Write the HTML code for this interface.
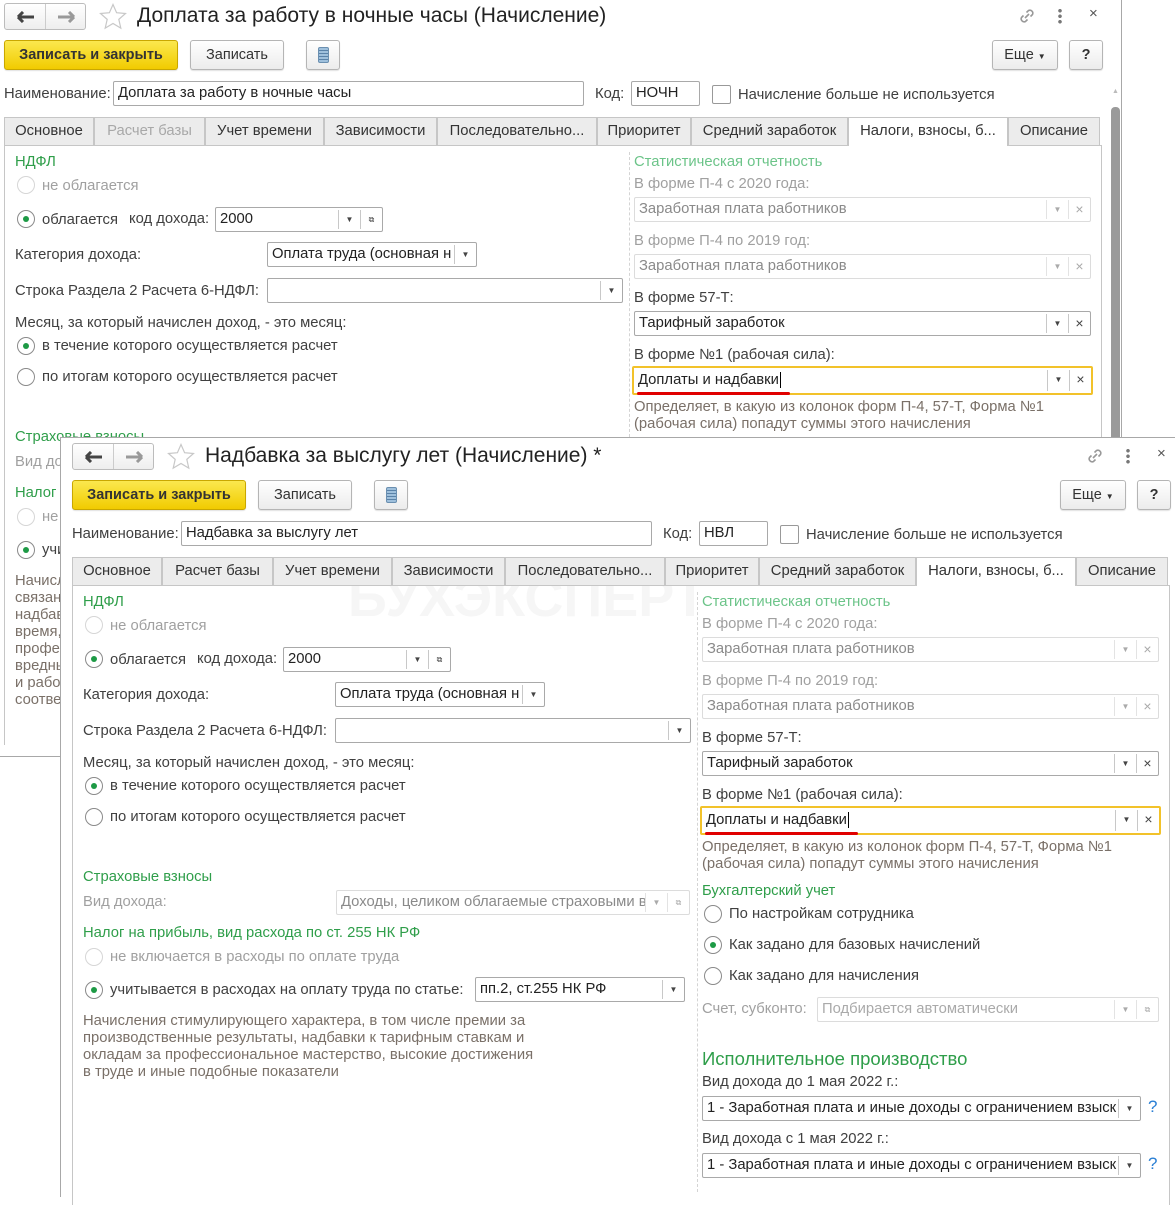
<!DOCTYPE html>
<html><head><meta charset="utf-8">
<style>
*{box-sizing:border-box;margin:0;padding:0}
body{width:1175px;height:1184px;overflow:hidden;background:#fff;position:relative;font-family:"Liberation Sans",Arial,sans-serif;font-size:14.8px;color:#333}
.w{position:absolute;width:1122px;height:760px}
.bg{position:absolute;background:#fff}
.t{position:absolute;white-space:nowrap;line-height:18px;font-size:14.8px;color:#404040}
.g{color:#2f9e4a}
.lg{color:#6cc489}
.gr{color:#a0a0a0}
.in{position:absolute;height:25px;border:1px solid #a9a9a9;border-radius:2px;background:#fff;line-height:23px;padding-left:4px;color:#222;overflow:hidden;white-space:nowrap;font-size:14.8px}
.in.d{border-color:#dcdcdc;color:#8a8a8a}
.b{position:absolute;top:2px;bottom:2px;width:22px;border-left:1px solid #c8c8c8;text-align:center;font-size:8px;color:#444;line-height:19px;background:#fff}
.d .b{border-left-color:#e3e3e3;color:#aaa}
.x{font-size:14px;line-height:19px}
.r{position:absolute;width:18px;height:18px;border:1px solid #8a8a8a;border-radius:50%;background:#fff}
.r.dis{border-color:#d6d6d6}
.r.on::after{content:"";position:absolute;left:5px;top:5px;width:6px;height:6px;border-radius:50%;background:#1d9a45}
.btn{position:absolute;top:40px;height:30px;border:1px solid #b5b5b5;border-radius:3px;background:linear-gradient(#fff,#ececec);text-align:center;line-height:28px;font-size:14.5px;color:#333;box-shadow:0 1px 1px rgba(0,0,0,.12)}
.y{background:linear-gradient(#fbe84e,#f1cb00);border-color:#c9a700;font-weight:bold;color:#333}
.tab{position:absolute;top:117px;height:28px;border:1px solid #c6c6c6;border-bottom:none;background:#ececec;text-align:center;line-height:27px;font-size:14.8px;color:#333;white-space:nowrap}
.tab.a{background:#fff;height:29px}
.panel{position:absolute;left:4px;top:145px;width:1098px;border-left:1px solid #c6c6c6;border-right:1px solid #c6c6c6;border-top:1px solid #c6c6c6}
.sep{position:absolute;left:629px;top:152px;border-left:1px dashed #d4d4d4}
.desc{color:#7a7068}
</style></head><body>

<!-- WINDOW 1 -->
<div class="w" style="left:0;top:0">
 <div class="bg" style="left:-1px;top:-1px;width:1123px;height:758px;border-right:1px solid #a8a8a8;border-bottom:1px solid #a8a8a8"></div>
 <div style="position:absolute;left:4px;top:3px;width:82px;height:27px;border:1px solid #bcbcbc;border-radius:3px;background:linear-gradient(#fff,#eee)"><div style="position:absolute;left:40px;top:0;bottom:0;border-left:1px solid #ccc"></div>
  <svg style="position:absolute;left:12px;top:7px" width="18" height="12"><path d="M1 6h16M1 6l5-5M1 6l5 5" stroke="#444" stroke-width="3" fill="none"/></svg>
  <svg style="position:absolute;left:52px;top:7px" width="18" height="12"><path d="M1 6h16M17 6l-5-5M17 6l-5 5" stroke="#999" stroke-width="3" fill="none"/></svg></div>
 <svg style="position:absolute;left:99px;top:3px" width="28" height="27"><path d="M14 1.5l3.6 8.2 8.9.8-6.7 5.9 2 8.7L14 20.5l-7.8 4.6 2-8.7-6.7-5.9 8.9-.8z" fill="none" stroke="#c8c8c8" stroke-width="1.2"/></svg>
 <div class="t" style="left:137px;top:4px;font-size:21px;line-height:24px;color:#222">Доплата за работу в ночные часы (Начисление)</div>
 <svg style="position:absolute;left:1017px;top:6px" width="20" height="20"><path d="M8 12l4-4M6.5 9.5l-2 2a3 3 0 004 4l2-2M13.5 10.5l2-2a3 3 0 00-4-4l-2 2" stroke="#999" stroke-width="1.6" fill="none"/></svg>
 <div style="position:absolute;left:1058px;top:8px;width:4px;height:16px;background:radial-gradient(circle,#777 1.6px,transparent 2px) 0 0/4px 5.5px"></div>
 <div class="t" style="left:1089px;top:5px;font-size:15px;color:#555">×</div>
 <div class="btn y" style="left:4px;width:174px">Записать и закрыть</div>
 <div class="btn" style="left:190px;width:94px">Записать</div>
 <div class="btn" style="left:306px;width:34px"><div style="position:absolute;left:11px;top:6px;width:11px;height:16px;border:1px solid #6a8fb0;border-radius:2px;background:repeating-linear-gradient(#9fc0dc 0 2px,#5a82a8 2px 3px)"></div></div>
 <div class="btn" style="left:992px;width:66px">Еще <span style="font-size:8px">▼</span></div>
 <div class="btn" style="left:1069px;width:34px;font-weight:bold">?</div>
 <div class="t" style="left:4px;top:85px">Наименование:</div>
 <div class="in" style="left:113px;top:81px;width:471px">Доплата за работу в ночные часы</div>
 <div class="t" style="left:595px;top:85px">Код:</div>
 <div class="in" style="left:631px;top:81px;width:69px">НОЧН</div>
 <div style="position:absolute;left:712px;top:85px;width:19px;height:19px;border:1px solid #999;border-radius:2px"></div>
 <div class="t" style="left:738px;top:86px">Начисление больше не используется</div>
 <div style="position:absolute;left:1112px;top:88px;font-size:7px;color:#bbb">▲</div>
 <div style="position:absolute;left:1111px;top:107px;width:9px;height:335px;background:#9a9a9a;border-radius:4px 4px 0 0"></div>

 <div class="panel" style="height:600px"></div>
 <div class="tab" style="left:4px;width:90px">Основное</div>
 <div class="tab" style="left:94px;width:111px;color:#a8a8a8">Расчет базы</div>
 <div class="tab" style="left:205px;width:119px">Учет времени</div>
 <div class="tab" style="left:324px;width:113px">Зависимости</div>
 <div class="tab" style="left:437px;width:160px">Последовательно...</div>
 <div class="tab" style="left:597px;width:94px">Приоритет</div>
 <div class="tab" style="left:691px;width:157px">Средний заработок</div>
 <div class="tab a" style="left:848px;width:160px">Налоги, взносы, б...</div>
 <div class="tab" style="left:1008px;width:92px">Описание</div>
 <div class="sep" style="height:285px"></div>

 <div class="t g" style="left:15px;top:153px">НДФЛ</div>
 <div class="r dis" style="left:17px;top:176px"></div><div class="t gr" style="left:42px;top:177px">не облагается</div>
 <div class="r on" style="left:17px;top:210px"></div><div class="t" style="left:42px;top:211px">облагается</div>
 <div class="t" style="left:129px;top:210px">код дохода:</div>
 <div class="in" style="left:215px;top:207px;width:168px">2000<div class="b" style="right:22px">▼</div><div class="b" style="right:0">⧉</div></div>
 <div class="t" style="left:15px;top:246px">Категория дохода:</div>
 <div class="in" style="left:267px;top:242px;width:210px">Оплата труда (основная н<div class="b" style="right:0">▼</div></div>
 <div class="t" style="left:15px;top:282px">Строка Раздела 2 Расчета 6-НДФЛ:</div>
 <div class="in" style="left:267px;top:278px;width:356px"><div class="b" style="right:0">▼</div></div>
 <div class="t" style="left:15px;top:314px">Месяц, за который начислен доход, - это месяц:</div>
 <div class="r on" style="left:17px;top:337px"></div><div class="t" style="left:42px;top:337px">в течение которого осуществляется расчет</div>
 <div class="r" style="left:17px;top:368px"></div><div class="t" style="left:42px;top:368px">по итогам которого осуществляется расчет</div>
 <div class="t g" style="left:15px;top:428px">Страховые взносы</div>
 <div class="t gr" style="left:15px;top:453px">Вид дохода:</div>
 <div class="t g" style="left:15px;top:484px">Налог на прибыль</div>
 <div class="r dis" style="left:17px;top:508px"></div><div class="t gr" style="left:42px;top:508px">не включается</div>
 <div class="r on" style="left:17px;top:541px"></div><div class="t" style="left:42px;top:541px">учитывается</div>
 <div class="t desc" style="left:15px;top:573px;line-height:17px">Начисления,<br>связанные<br>надбавки<br>время,<br>профессий<br>вредных<br>и работе<br>соответ</div>

 <div class="t lg" style="left:634px;top:153px">Статистическая отчетность</div>
 <div class="t gr" style="left:634px;top:175px">В форме П-4 с 2020 года:</div>
 <div class="in d" style="left:634px;top:197px;width:457px">Заработная плата работников<div class="b" style="right:22px">▼</div><div class="b x" style="right:0">×</div></div>
 <div class="t gr" style="left:634px;top:232px">В форме П-4 по 2019 год:</div>
 <div class="in d" style="left:634px;top:254px;width:457px">Заработная плата работников<div class="b" style="right:22px">▼</div><div class="b x" style="right:0">×</div></div>
 <div class="t" style="left:634px;top:289px">В форме 57-Т:</div>
 <div class="in" style="left:634px;top:311px;width:457px">Тарифный заработок<div class="b" style="right:22px">▼</div><div class="b x" style="right:0">×</div></div>
 <div class="t" style="left:634px;top:346px">В форме №1 (рабочая сила):</div>
 <div class="in" style="left:632px;top:366px;width:461px;height:29px;border:2px solid #f2c22a;line-height:25px">Доплаты и надбавки<span style="border-left:1px solid #000;margin-left:1px"></span><div class="b" style="right:22px">▼</div><div class="b x" style="right:0">×</div></div>
 <div style="position:absolute;left:637px;top:392px;width:153px;height:3px;background:#e00000;border-radius:2px"></div>
 <div class="t desc" style="left:634px;top:399px;line-height:17px">Определяет, в какую из колонок форм П-4, 57-Т, Форма №1<br>(рабочая сила) попадут суммы этого начисления</div>
</div>

<!-- WINDOW 2 -->
<div class="w" style="left:68px;top:440px">
 <div class="bg" style="left:-8px;top:-3px;width:1130px;height:760px;border-left:1px solid #a8a8a8;border-top:1px solid #a8a8a8"></div>
 <div class="t" style="left:280px;top:128px;font-size:54px;line-height:60px;font-weight:bold;color:#f6f6f6">БУХЭКСПЕРТ</div>
 <div style="position:absolute;left:4px;top:3px;width:82px;height:27px;border:1px solid #bcbcbc;border-radius:3px;background:linear-gradient(#fff,#eee)"><div style="position:absolute;left:40px;top:0;bottom:0;border-left:1px solid #ccc"></div>
  <svg style="position:absolute;left:12px;top:7px" width="18" height="12"><path d="M1 6h16M1 6l5-5M1 6l5 5" stroke="#444" stroke-width="3" fill="none"/></svg>
  <svg style="position:absolute;left:52px;top:7px" width="18" height="12"><path d="M1 6h16M17 6l-5-5M17 6l-5 5" stroke="#999" stroke-width="3" fill="none"/></svg></div>
 <svg style="position:absolute;left:99px;top:3px" width="28" height="27"><path d="M14 1.5l3.6 8.2 8.9.8-6.7 5.9 2 8.7L14 20.5l-7.8 4.6 2-8.7-6.7-5.9 8.9-.8z" fill="none" stroke="#c8c8c8" stroke-width="1.2"/></svg>
 <div class="t" style="left:137px;top:4px;font-size:21px;line-height:24px;color:#222">Надбавка за выслугу лет (Начисление) *</div>
 <svg style="position:absolute;left:1017px;top:6px" width="20" height="20"><path d="M8 12l4-4M6.5 9.5l-2 2a3 3 0 004 4l2-2M13.5 10.5l2-2a3 3 0 00-4-4l-2 2" stroke="#999" stroke-width="1.6" fill="none"/></svg>
 <div style="position:absolute;left:1058px;top:8px;width:4px;height:16px;background:radial-gradient(circle,#777 1.6px,transparent 2px) 0 0/4px 5.5px"></div>
 <div class="t" style="left:1089px;top:5px;font-size:15px;color:#555">×</div>
 <div class="btn y" style="left:4px;width:174px">Записать и закрыть</div>
 <div class="btn" style="left:190px;width:94px">Записать</div>
 <div class="btn" style="left:306px;width:34px"><div style="position:absolute;left:11px;top:6px;width:11px;height:16px;border:1px solid #6a8fb0;border-radius:2px;background:repeating-linear-gradient(#9fc0dc 0 2px,#5a82a8 2px 3px)"></div></div>
 <div class="btn" style="left:992px;width:66px">Еще <span style="font-size:8px">▼</span></div>
 <div class="btn" style="left:1069px;width:34px;font-weight:bold">?</div>
 <div class="t" style="left:4px;top:85px">Наименование:</div>
 <div class="in" style="left:113px;top:81px;width:471px">Надбавка за выслугу лет</div>
 <div class="t" style="left:595px;top:85px">Код:</div>
 <div class="in" style="left:631px;top:81px;width:69px">НВЛ</div>
 <div style="position:absolute;left:712px;top:85px;width:19px;height:19px;border:1px solid #999;border-radius:2px"></div>
 <div class="t" style="left:738px;top:86px">Начисление больше не используется</div>

 <div class="panel" style="height:620px"></div>
 <div class="tab" style="left:4px;width:90px">Основное</div>
 <div class="tab" style="left:94px;width:111px">Расчет базы</div>
 <div class="tab" style="left:205px;width:119px">Учет времени</div>
 <div class="tab" style="left:324px;width:113px">Зависимости</div>
 <div class="tab" style="left:437px;width:160px">Последовательно...</div>
 <div class="tab" style="left:597px;width:94px">Приоритет</div>
 <div class="tab" style="left:691px;width:157px">Средний заработок</div>
 <div class="tab a" style="left:848px;width:160px">Налоги, взносы, б...</div>
 <div class="tab" style="left:1008px;width:92px">Описание</div>
 <div class="sep" style="height:600px"></div>

 <div class="t g" style="left:15px;top:153px">НДФЛ</div>
 <div class="r dis" style="left:17px;top:176px"></div><div class="t gr" style="left:42px;top:177px">не облагается</div>
 <div class="r on" style="left:17px;top:210px"></div><div class="t" style="left:42px;top:211px">облагается</div>
 <div class="t" style="left:129px;top:210px">код дохода:</div>
 <div class="in" style="left:215px;top:207px;width:168px">2000<div class="b" style="right:22px">▼</div><div class="b" style="right:0">⧉</div></div>
 <div class="t" style="left:15px;top:246px">Категория дохода:</div>
 <div class="in" style="left:267px;top:242px;width:210px">Оплата труда (основная н<div class="b" style="right:0">▼</div></div>
 <div class="t" style="left:15px;top:282px">Строка Раздела 2 Расчета 6-НДФЛ:</div>
 <div class="in" style="left:267px;top:278px;width:356px"><div class="b" style="right:0">▼</div></div>
 <div class="t" style="left:15px;top:314px">Месяц, за который начислен доход, - это месяц:</div>
 <div class="r on" style="left:17px;top:337px"></div><div class="t" style="left:42px;top:337px">в течение которого осуществляется расчет</div>
 <div class="r" style="left:17px;top:368px"></div><div class="t" style="left:42px;top:368px">по итогам которого осуществляется расчет</div>
 <div class="t g" style="left:15px;top:428px">Страховые взносы</div>
 <div class="t gr" style="left:15px;top:453px">Вид дохода:</div>
 <div class="in d" style="left:268px;top:450px;width:354px">Доходы, целиком облагаемые страховыми в<div class="b" style="right:22px">▼</div><div class="b" style="right:0">⧉</div></div>
 <div class="t g" style="left:15px;top:484px">Налог на прибыль, вид расхода по ст. 255 НК РФ</div>
 <div class="r dis" style="left:17px;top:508px"></div><div class="t gr" style="left:42px;top:508px">не включается в расходы по оплате труда</div>
 <div class="r on" style="left:17px;top:541px"></div><div class="t" style="left:42px;top:541px">учитывается в расходах на оплату труда по статье:</div>
 <div class="in" style="left:407px;top:537px;width:210px">пп.2, ст.255 НК РФ<div class="b" style="right:0">▼</div></div>
 <div class="t desc" style="left:15px;top:573px;line-height:17px">Начисления стимулирующего характера, в том числе премии за<br>производственные результаты, надбавки к тарифным ставкам и<br>окладам за профессиональное мастерство, высокие достижения<br>в труде и иные подобные показатели</div>

 <div class="t lg" style="left:634px;top:153px">Статистическая отчетность</div>
 <div class="t gr" style="left:634px;top:175px">В форме П-4 с 2020 года:</div>
 <div class="in d" style="left:634px;top:197px;width:457px">Заработная плата работников<div class="b" style="right:22px">▼</div><div class="b x" style="right:0">×</div></div>
 <div class="t gr" style="left:634px;top:232px">В форме П-4 по 2019 год:</div>
 <div class="in d" style="left:634px;top:254px;width:457px">Заработная плата работников<div class="b" style="right:22px">▼</div><div class="b x" style="right:0">×</div></div>
 <div class="t" style="left:634px;top:289px">В форме 57-Т:</div>
 <div class="in" style="left:634px;top:311px;width:457px">Тарифный заработок<div class="b" style="right:22px">▼</div><div class="b x" style="right:0">×</div></div>
 <div class="t" style="left:634px;top:346px">В форме №1 (рабочая сила):</div>
 <div class="in" style="left:632px;top:366px;width:461px;height:29px;border:2px solid #f2c22a;line-height:25px">Доплаты и надбавки<span style="border-left:1px solid #000;margin-left:1px"></span><div class="b" style="right:22px">▼</div><div class="b x" style="right:0">×</div></div>
 <div style="position:absolute;left:637px;top:392px;width:153px;height:3px;background:#e00000;border-radius:2px"></div>
 <div class="t desc" style="left:634px;top:399px;line-height:17px">Определяет, в какую из колонок форм П-4, 57-Т, Форма №1<br>(рабочая сила) попадут суммы этого начисления</div>
 <div class="t g" style="left:634px;top:442px">Бухгалтерский учет</div>
 <div class="r" style="left:636px;top:465px"></div><div class="t" style="left:661px;top:465px">По настройкам сотрудника</div>
 <div class="r on" style="left:636px;top:496px"></div><div class="t" style="left:661px;top:496px">Как задано для базовых начислений</div>
 <div class="r" style="left:636px;top:527px"></div><div class="t" style="left:661px;top:527px">Как задано для начисления</div>
 <div class="t gr" style="left:634px;top:560px">Счет, субконто:</div>
 <div class="in d" style="left:749px;top:557px;width:342px;color:#aaa">Подбирается автоматически<div class="b" style="right:22px">▼</div><div class="b" style="right:0">⧉</div></div>
 <div class="t g" style="left:634px;top:608px;font-size:18.5px;line-height:22px">Исполнительное производство</div>
 <div class="t" style="left:634px;top:633px">Вид дохода до 1 мая 2022 г.:</div>
 <div class="in" style="left:634px;top:656px;width:439px">1 - Заработная плата и иные доходы с ограничением взыск<div class="b" style="right:0">▼</div></div>
 <div class="t" style="left:1080px;top:658px;font-size:17px;color:#2a7fd4">?</div>
 <div class="t" style="left:634px;top:690px">Вид дохода с 1 мая 2022 г.:</div>
 <div class="in" style="left:634px;top:713px;width:439px">1 - Заработная плата и иные доходы с ограничением взыск<div class="b" style="right:0">▼</div></div>
 <div class="t" style="left:1080px;top:715px;font-size:17px;color:#2a7fd4">?</div>
</div>
</body></html>
